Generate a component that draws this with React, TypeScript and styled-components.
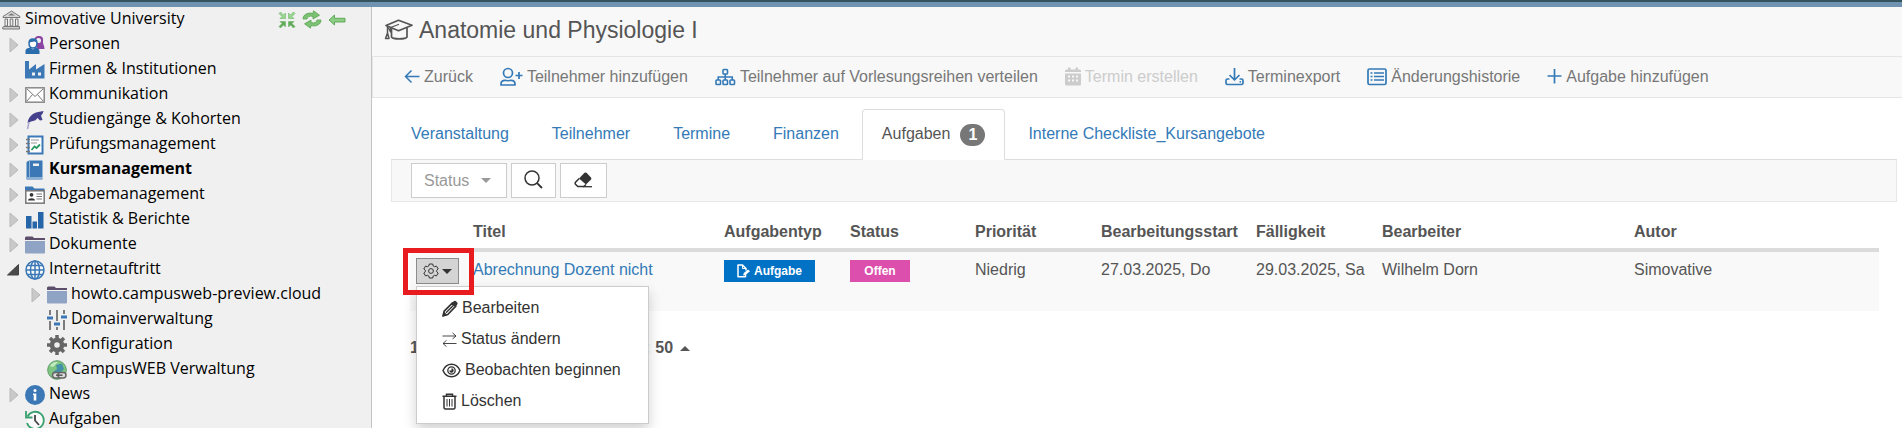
import React from 'react';
import styled, { createGlobalStyle, css } from 'styled-components';

const BLUE = '#337ab7';
const GREY = '#777777';
const DARK = '#333333';

const GlobalStyle = createGlobalStyle`
  *, *::before, *::after { box-sizing: border-box; }
  body {
    margin: 0;
    background: #ffffff;
    color: #555555;
    font-family: "Liberation Sans", Arial, sans-serif;
    font-size: 16px;
    line-height: 22px;
  }
  a { text-decoration: none; color: inherit; }
  button, select { font: inherit; color: inherit; margin: 0; }
  ul { list-style: none; margin: 0; padding: 0; }
  svg { display: block; flex: none; }
`;

/* ---------- page frame ---------- */

const Page = styled.div`
  display: flex;
  flex-direction: column;
  height: 100vh;
`;

const TopBar = styled.div`
  flex: none;
  height: 7px;
  background: #6f93b1;
  border-top: 2px solid #33535f;
`;

const Columns = styled.div`
  display: flex;
  flex: 1;
  min-height: 0;
`;

const Sidebar = styled.nav`
  flex: none;
  width: 372px;
  overflow: hidden;
  background: #f0f0f0;
  border-right: 1px solid #c4c4c4;
  color: #000000;
  font-family: "Open Sans", "Noto Sans", sans-serif;
`;

const Main = styled.main`
  flex: 1;
  min-width: 0;
`;

/* ---------- sidebar tree ---------- */

const TreeHead = styled.div`
  display: flex;
  align-items: center;
  height: 25px;
  padding: 0 25px 0 2px;
`;

const TreeTools = styled.div`
  display: flex;
  align-items: center;
  gap: 6px;
  margin-left: auto;
`;

const ToolButton = styled.button`
  padding: 0;
  border: 0;
  background: none;
`;

const TreeRow = styled.li<{ $level: number }>`
  display: flex;
  align-items: center;
  height: 25px;
  padding-left: ${p => 7 + p.$level * 22}px;
`;

const Twisty = styled.span`
  flex: none;
  width: 18px;
`;

const TreeLink = styled.a<{ $bold?: boolean }>`
  display: flex;
  align-items: center;
  gap: 4px;
  font-weight: ${p => (p.$bold ? 700 : 400)};
`;

const TreeLabel = styled.span`
  padding-bottom: 3px;
  line-height: 22px;
  white-space: nowrap;
`;

/* ---------- header and toolbar ---------- */

const TitleBar = styled.header`
  display: flex;
  align-items: center;
  gap: 6px;
  height: 49px;
  padding: 0 12px 4px;
  background: #f8f8f8;
`;

const Title = styled.h1`
  margin: 0;
  font-size: 23px;
  line-height: 26px;
  font-weight: 400;
`;

const Toolbar = styled.div`
  display: flex;
  align-items: center;
  gap: 27px;
  height: 42px;
  padding: 0 31px 1px;
  background: #f8f8f8;
  border: 1px solid #e5e5e5;
  border-right: 0;
`;

const Action = styled.button`
  display: flex;
  align-items: center;
  gap: 4px;
  padding: 0;
  border: 0;
  background: none;
  color: ${GREY};
  white-space: nowrap;
  svg { color: ${BLUE}; }
  &:disabled, &:disabled svg { color: #cccccc; }
`;

/* ---------- tabs and filters ---------- */

const Content = styled.div`
  padding: 11px 5px 0 19px;
`;

const Tabs = styled.div`
  display: flex;
  gap: 3px;
  border-bottom: 1px solid #dddddd;
`;

const Tab = styled.a<{ $active?: boolean }>`
  display: flex;
  align-items: center;
  gap: 10px;
  height: 51px;
  margin-bottom: -1px;
  padding: 0 19px 2px;
  border: 1px solid transparent;
  border-radius: 4px 4px 0 0;
  color: ${BLUE};
  white-space: nowrap;
  ${p => p.$active && css`
    color: #555555;
    background: #ffffff;
    border-color: #dddddd #dddddd transparent;
  `}
`;

const Count = styled.span`
  width: 25px;
  margin-top: 2px;
  border-radius: 11px;
  background: #777777;
  color: #ffffff;
  font-weight: 700;
  text-align: center;
`;

const FilterBar = styled.div`
  display: flex;
  gap: 4px;
  height: 42px;
  padding: 3px 19px;
  background: #f8f8f8;
  border: 1px solid #e7e7e7;
  border-top: 0;
`;

const SelectBox = styled.label`
  display: flex;
  align-items: center;
  width: 96px;
  height: 35px;
  padding-right: 15px;
  background: #ffffff;
  border: 1px solid #cccccc;
  color: #999999;
`;

const Select = styled.select`
  flex: 1;
  min-width: 0;
  padding: 0 0 0 12px;
  border: 0;
  background: none;
  appearance: none;
`;

const FilterButton = styled.button<{ $width: number }>`
  display: flex;
  align-items: center;
  justify-content: center;
  width: ${p => p.$width}px;
  height: 35px;
  padding: 0 0 2px;
  background: #ffffff;
  border: 1px solid #cccccc;
  color: ${DARK};
`;

/* ---------- table ---------- */

const TableArea = styled.div`
  padding: 8px 18px 0 19px;
`;

const Table = styled.table`
  width: 100%;
  table-layout: fixed;
  border-collapse: separate;
  border-spacing: 0;
`;

const HeadCell = styled.th`
  height: 42px;
  padding: 6px 5px 0;
  border-bottom: 4px solid #dbdbdb;
  font-weight: 700;
  text-align: left;
  white-space: nowrap;
`;

const Cell = styled.td`
  height: 59px;
  padding: 7px 5px 0;
  background: #f9f9f9;
  vertical-align: top;
  white-space: nowrap;
`;

const TaskLink = styled.a`
  color: ${BLUE};
`;

const Tag = styled.span<{ $color: string }>`
  display: inline-flex;
  align-items: center;
  justify-content: center;
  gap: 4px;
  min-width: 60px;
  height: 22px;
  margin-top: 1px;
  padding: 0 13px;
  background: ${p => p.$color};
  color: #ffffff;
  font-size: 12px;
  font-weight: 700;
  vertical-align: top;
`;

const MenuAnchor = styled.div`
  position: relative;
  width: 44px;
  margin: -1px 0 0 1px;
`;

const GearButton = styled.button`
  display: flex;
  align-items: center;
  gap: 3px;
  width: 43px;
  height: 26px;
  padding: 0 6px;
  background: #d4d4d4;
  border: 1px solid #8c8c8c;
  color: ${DARK};
`;

const Highlight = styled.div`
  position: absolute;
  z-index: 3;
  top: -10px;
  left: -13px;
  width: 71px;
  height: 47px;
  border: 5px solid #e81b1f;
  pointer-events: none;
`;

const Menu = styled.ul`
  position: absolute;
  z-index: 2;
  top: 28px;
  left: 0;
  width: 233px;
  padding: 6px 0;
  background: #ffffff;
  border: 1px solid #cccccc;
  box-shadow: 0 6px 12px rgba(0, 0, 0, 0.18);
`;

const MenuItem = styled.button`
  display: flex;
  align-items: center;
  gap: 4px;
  width: 100%;
  height: 31px;
  padding: 0 25px 1px;
  border: 0;
  background: none;
  color: ${DARK};
  white-space: nowrap;
`;

const Pager = styled.div`
  display: flex;
  align-items: center;
  padding-top: 26px;
  font-weight: 700;
`;

const PageNumber = styled.span`
  width: 235px;
`;

const PageSize = styled.button`
  display: flex;
  align-items: center;
  gap: 7px;
  padding: 0 0 0 5px;
  border: 0;
  background: none;
  font-weight: 700;
`;

/* ---------- icons ---------- */

type SvgProps = { w: number; h: number; children: React.ReactNode };
const Svg = ({ w, h, children }: SvgProps) => (
  <svg width={w} height={h} viewBox={`0 0 ${w} ${h}`} fill="none" aria-hidden="true">
    {children}
  </svg>
);

const CaretDown = () => (
  <Svg w={10} h={5}><path d="M0 0H10L5 5Z" fill="currentColor" /></Svg>
);
const CaretUp = () => (
  <Svg w={10} h={5}><path d="M0 5H10L5 0Z" fill="currentColor" /></Svg>
);

const Closed = () => (
  <Svg w={12} h={16}>
    <path d="M3 1L11 8L3 15Z" fill="#c9c9c9" stroke="#b9b9b9" />
  </Svg>
);
const Opened = () => (
  <Svg w={12} h={16}><path d="M11.500 2.500V13H0.500Z" fill="#4a4a4a" stroke="#444" /></Svg>
);

const BankIcon = () => (
  <Svg w={19} h={20}>
    <path d="M1 6.500L9.500 1L18 6.500V7.500H1Z" fill="#d9d9d9" stroke="#777" />
    <path d="M6 5.500L9.500 3.200L13 5.500Z" fill="#777" />
    <path d="M3 9H5.500V16H3ZM8.200 9H10.800V16H8.200ZM13.500 9H16V16H13.500Z" fill="#eee" stroke="#777" />
    <path d="M1.500 16.500H17.500V19H.8V17Z" fill="#ccc" stroke="#777" />
  </Svg>
);
const CollapseIcon = () => (
  <Svg w={18} h={18}>
    <g stroke="#6fb568" strokeWidth=".6">
      <path d="M1 2.500L2.500 1L5.500 4L7.500 2V7.500H2L4 5.500Z" fill="#9ad692" />
      <path d="M17 2.500L15.500 1L12.500 4L10.500 2V7.500H16L14 5.500Z" fill="#9ad692" />
      <path d="M1 15.500L2.500 17L5.500 14L7.500 16V10.500H2L4 12.500Z" fill="#5fab59" />
      <path d="M17 15.500L15.500 17L12.500 14L10.500 16V10.500H16L14 12.500Z" fill="#5fab59" />
    </g>
  </Svg>
);
const RefreshIcon = () => (
  <Svg w={20} h={19}>
    <g fill="#7cc274" stroke="#57a44f" strokeWidth=".8">
      <path d="M1 9C1 4.500 6 2 11 3.500L11.500 .8L17.500 5.200L11 9L11 6.500C7.500 5.500 5.500 6.500 5 9Z" />
      <path d="M19 10C19 14.500 14 17 9 15.500L8.500 18.200L2.500 13.800L9 10L9 12.500C12.500 13.500 14.500 12.500 15 10Z" />
    </g>
  </Svg>
);
const BackIcon = () => (
  <Svg w={18} h={12}>
    <path d="M1 6L6.500 1V4.300H17V8H6.500V11Z" fill="#8ccd85" stroke="#57a44f" strokeWidth=".9" />
  </Svg>
);
const PeopleIcon = () => (
  <Svg w={20} h={20}>
    <path d="M9.500 6C9 2.500 11 1 14 1C17.500 1 18.500 3 18 7C18 10 19.500 10 19.500 14H12Z" fill="#8a45a3" />
    <circle cx="13.500" cy="5.500" r="2.500" fill="#f0f0f0" />
    <path d="M4 8C4 5 5.500 4 8 4C10.500 4 12 5 12 8C12 12 10 13 8 13C6 13 4 12 4 8Z" fill="#fff" stroke="#2b6cad" strokeWidth="1.500" />
    <path d="M4 8C4 5 5.500 4 8 4C10.500 4 12 5 12 8L10 6.500L6 7Z" fill="#2b6cad" />
    <path d="M.5 19V16C.5 13.500 3 13 5 12.500L8 14.500L10.500 12.500C12.500 13 14.500 14 14.500 16V19Z" fill="#2b6cad" />
  </Svg>
);
const FactoryIcon = () => (
  <Svg w={20} h={19}>
    <path d="M0 18.500V1H4V9.500L11 4V9.500L19.500 4V18.500Z" fill="#3c78b5" />
    <path d="M7 12.500H10V15.500H7ZM13 12.500H16V15.500H13Z" fill="#f0f0f0" />
  </Svg>
);
const MailIcon = () => (
  <Svg w={20} h={16}>
    <rect x=".8" y=".8" width="18.400" height="14.400" fill="#fff" stroke="#888" strokeWidth="1.500" />
    <path d="M2 2L10 9.500L18 2M2 14L7.500 7.500M18 14L12.500 7.500" stroke="#777" />
  </Svg>
);
const QuillIcon = () => (
  <Svg w={20} h={20}>
    <path d="M2.500 13C3 9 5 6 8 4C11 1.800 15 2 18.500 1C18 3 17.500 4 16 5.500L17.500 10L15 10.500L12.500 8C10 11.500 8 10.500 5 12Z" fill="#45418c" />
    <path d="M4 12L2.500 19" stroke="#a9a5cf" strokeWidth="1.500" />
  </Svg>
);
const ReportIcon = () => (
  <Svg w={20} h={20}>
    <rect x="3.500" y="1.500" width="14" height="17" fill="#fff" stroke="#3c78b5" strokeWidth="2" />
    <path d="M6 5H14M6 8H12" stroke="#999" />
    <path d="M6.500 15L9.500 11.500L11.500 13L15 9.500" stroke="#2a9a62" strokeWidth="1.800" />
    <path d="M1 4.500H5M1 8.500H5M1 12.500H5M1 16.500H5" stroke="#777" strokeWidth="1.500" />
  </Svg>
);
const BookIcon = () => (
  <Svg w={20} h={20}>
    <path d="M1.500 2L4 .5H17.500V19.500H1.500Z" fill="#3c78b5" />
    <path d="M4.500 1V17" stroke="#8fb4d8" />
    <path d="M2 18H17.500" stroke="#dce8f3" />
    <path d="M8 3.500H14V6H8Z" fill="#f0f0f0" />
  </Svg>
);
const CardIcon = () => (
  <Svg w={20} h={18}>
    <path d="M0 5V.5H7.500L9.500 2.500H19.500V5Z" fill="#3c78b5" />
    <rect x=".8" y="4.800" width="18.400" height="12.400" fill="#fff" stroke="#777" strokeWidth="1.500" />
    <circle cx="6.500" cy="8.800" r="1.900" fill="#333" />
    <path d="M3 14.500C3 11.500 10 11.500 10 14.500Z" fill="#333" />
    <path d="M11.500 8H17M11.500 10.500H17M11.500 13H17" stroke="#777" />
  </Svg>
);
const BarsIcon = () => (
  <Svg w={20} h={20}>
    <path d="M1 6H6.500V18.500H1ZM7.500 11.500H12V18.500H7.500ZM13 2H18.500V18.500H13Z" fill="#2666a8" />
  </Svg>
);
const FolderIcon = () => (
  <Svg w={20} h={18}>
    <path d="M0 4V1.500L1 .5H7.500L9 2H20V4Z" fill="#5d4f6b" />
    <path d="M0 5H20V16.500Q20 17.500 19 17.500H1Q0 17.500 0 16.500Z" fill="#8fa3c4" />
  </Svg>
);
const GlobeIcon = () => (
  <Svg w={20} h={20}>
    <g stroke="#3c78b5" strokeWidth="1.500">
      <circle cx="10" cy="10" r="9" fill="#f7fafd" />
      <ellipse cx="10" cy="10" rx="4.500" ry="9" />
      <path d="M10 1V19M1 10H19M2.500 5.500H17.500M2.500 14.500H17.500" />
    </g>
  </Svg>
);
const SlidersIcon = () => (
  <Svg w={20} h={20}>
    <path d="M3 0V5M3 11V20M10 0V11M10 17V20M17 0V4M17 10V20" stroke="#555" strokeWidth="1.500" />
    <path d="M0 6.500H6V9.500H0ZM7 12.500H13V15.500H7ZM14 5.500H20V8.500H14Z" fill="#3c78b5" />
  </Svg>
);
const CogSolidIcon = () => (
  <Svg w={20} h={20}>
    <circle cx="10" cy="10" r="5" stroke="#666" strokeWidth="4.500" />
    <path d="M10 0V3.500M10 16.500V20M0 10H3.500M16.500 10H20M3 3L5.500 5.500M14.500 14.500L17 17M17 3L14.500 5.500M5.500 14.500L3 17" stroke="#666" strokeWidth="3.500" />
  </Svg>
);
const WebLinkIcon = () => (
  <Svg w={20} h={20}>
    <circle cx="10" cy="10" r="9.300" fill="#7fc683" stroke="#5f9d66" />
    <path d="M9 5L15 3.500L17 9L12 14L6 12L10 9Z" fill="#4592a8" />
    <path d="M3 6C5 2 9 2 11 2L6 7Z" fill="#c5ebc2" />
    <rect x="5.500" y="12.500" width="8" height="5.500" rx="2.700" fill="#ddd" stroke="#666" strokeWidth="1.500" />
    <rect x="11" y="12.500" width="8" height="5.500" rx="2.700" fill="#ddd" stroke="#666" strokeWidth="1.500" />
    <path d="M9 15.200H15.500" stroke="#555" strokeWidth="1.500" />
  </Svg>
);
const InfoIcon = () => (
  <Svg w={20} h={20}>
    <circle cx="10" cy="10" r="10" fill="#3c78b5" />
    <circle cx="10" cy="5.500" r="1.500" fill="#fff" />
    <path d="M8 8.500H11.300V15.500H8.700V10H8Z" fill="#fff" />
  </Svg>
);
const HistoryIcon = () => (
  <Svg w={20} h={20}>
    <path d="M2.500 6.500A8.600 8.600 0 1 1 2 13" fill="#fafafa" stroke="#3aa06e" strokeWidth="1.800" />
    <path d="M1 1V7.500H7.500" stroke="#3aa06e" strokeWidth="1.800" />
    <path d="M10 5V10.500L14 15" stroke="#444" strokeWidth="1.800" />
  </Svg>
);

const GraduationIcon = () => (
  <Svg w={29} h={21}>
    <g stroke="#555" strokeWidth="1.700" strokeLinejoin="round" strokeLinecap="round">
      <path d="M14.500 1.200L28 6.200L14.500 11.700L2 6.500Z" />
      <path d="M14.500 5.500L6.500 8.500V13L4.500 9" strokeWidth="1.300" />
      <path d="M7.500 10V18C9 20.500 21.500 20.500 23 18V9" />
      <path d="M3.500 7.500V14L1.500 19.500H5L3.500 14" strokeWidth="1.500" />
    </g>
  </Svg>
);
const ArrowLeftIcon = () => (
  <Svg w={16} h={16}>
    <path d="M15.500 7.500H1.500M7.500 1.500L1.500 7.500L7.500 13.500" stroke="currentColor" strokeWidth="1.500" />
  </Svg>
);
const PersonPlusIcon = () => (
  <Svg w={23} h={20}>
    <circle cx="8" cy="6" r="4.500" stroke="currentColor" strokeWidth="1.700" />
    <path d="M1 18V17C1 14.500 3 13.300 5 13.300C7 13.900 9 13.900 11 13.300C13 13.300 15 14.500 15 17V18Z" stroke="currentColor" strokeWidth="1.700" strokeLinejoin="round" />
    <path d="M19 5V12M15.500 8.500H22.500" stroke="currentColor" strokeWidth="1.700" />
  </Svg>
);
const SitemapIcon = () => (
  <Svg w={21} h={18}>
    <g stroke="currentColor" strokeWidth="1.600">
      <rect x="8" y="1.500" width="4.500" height="4.500" rx=".8" />
      <rect x="1" y="12" width="4.500" height="4.500" rx=".8" />
      <rect x="8" y="12" width="4.500" height="4.500" rx=".8" />
      <rect x="15" y="12" width="4.500" height="4.500" rx=".8" />
      <path d="M10.250 6V12M3.250 12V9H17.250V12" />
    </g>
  </Svg>
);
const CalendarIcon = () => (
  <Svg w={16} h={19}>
    <path d="M0 5V4Q0 2.500 1.500 2.500H3V.5H5.500V2.500H10.500V.5H13V2.500H14.500Q16 2.500 16 4V5ZM0 6.500H16V17Q16 18.500 14.500 18.500H1.500Q0 18.500 0 17Z" fill="currentColor" />
    <path d="M3 8.500H5V10.500H3ZM7 8.500H9V10.500H7ZM11 8.500H13V10.500H11ZM3 12.500H5V14.500H3ZM7 12.500H9V14.500H7ZM11 12.500H13V14.500H11Z" fill="#f8f8f8" />
  </Svg>
);
const DownloadIcon = () => (
  <Svg w={19} h={19}>
    <g stroke="currentColor" strokeWidth="1.700" strokeLinejoin="round">
      <path d="M9.500 1V13M4.500 8L9.500 13L14.500 8" />
      <path d="M4.500 12H2.500Q1 12 1 13.500V16Q1 17.500 2.500 17.500H16.500Q18 17.500 18 16V13.500Q18 12 16.500 12H14.500" />
    </g>
    <circle cx="15.300" cy="14.800" r=".9" fill="currentColor" />
  </Svg>
);
const ListIcon = () => (
  <Svg w={20} h={18}>
    <rect x="1" y="1" width="18" height="15.500" rx="1.500" stroke="currentColor" strokeWidth="1.700" />
    <path d="M3.500 5H5.500M3.500 8.500H5.500M3.500 12H5.500M7 5H17M7 8.500H17M7 12H17" stroke="currentColor" strokeWidth="1.600" />
  </Svg>
);
const PlusIcon = () => (
  <Svg w={15} h={17}>
    <path d="M7.500 1V15.500M.5 8H14.500" stroke="currentColor" strokeWidth="1.700" />
  </Svg>
);
const SearchIcon = () => (
  <Svg w={19} h={19}>
    <circle cx="8" cy="8" r="7" stroke="currentColor" strokeWidth="1.500" />
    <path d="M12.800 12.800L18 18" stroke="currentColor" strokeWidth="1.900" />
  </Svg>
);
const EraserIcon = () => (
  <Svg w={19} h={16}>
    <path d="M5 6.500L10.500 .8Q11.500 0 12.500 .8L17 5.500Q17.800 6.500 17 7.500L12 12.500Z" fill="currentColor" />
    <path d="M5.200 6.500L1.500 10.200Q.8 11.200 1.500 12.200L3.800 14.500H9.800L12 12.500" stroke="currentColor" strokeWidth="1.500" />
    <path d="M9 14.700H18" stroke="currentColor" strokeWidth="1.300" />
  </Svg>
);
const GearIcon = () => (
  <Svg w={16} h={16}>
    <g stroke="currentColor" strokeWidth="1" strokeLinejoin="round">
      <path d="M6.300 1H9.700L10.200 3L11.500 3.700L13.500 3.100L15.200 6L13.700 7.300V8.700L15.200 10L13.500 12.900L11.500 12.300L10.200 13L9.700 15H6.300L5.800 13L4.500 12.300L2.500 12.900L.8 10L2.300 8.700V7.300L.8 6L2.500 3.100L4.500 3.700L5.800 3Z" />
      <circle cx="8" cy="8" r="2.400" />
    </g>
  </Svg>
);
const FileEditIcon = () => (
  <Svg w={13} h={14}>
    <path d="M8.500 10V12.800H1V1H5.500L9 4.500V6.500" stroke="#fff" strokeWidth="1.500" strokeLinejoin="round" />
    <path d="M5.500 1V4.500H9" stroke="#fff" />
    <path d="M6 11.500L6.800 9L11 5.500L13 7.200L8.500 11Z" fill="#fff" />
  </Svg>
);
const PencilIcon = () => (
  <Svg w={16} h={17}>
    <path d="M1 16L2.200 11.200L10.500 2.900L13.800 6.200L5.800 14.500Z" stroke="currentColor" strokeWidth="1.700" strokeLinejoin="round" />
    <path d="M9.800 3.200L12 1Q13 .2 14 1.200L15.200 2.500Q16 3.500 15.300 4.500L13.300 6.700ZM.5 16.500L1.800 11.500L5.300 15Z" fill="currentColor" />
    <path d="M4 12.800L11.800 5" stroke="currentColor" strokeWidth="1.300" />
  </Svg>
);
const SwapIcon = () => (
  <Svg w={15} h={15}>
    <path d="M.5 4H14M10.500 .8L14 4L10.500 7M14.500 11.500H1M4.500 8.300L1 11.500L4.500 14.700" stroke="currentColor" strokeWidth=".9" />
  </Svg>
);
const EyeIcon = () => (
  <Svg w={19} h={15}>
    <path d="M1 7.500C4.500 -.8 14.500 -.8 18 7.500C14.500 15.800 4.500 15.800 1 7.500Z" stroke="currentColor" strokeWidth="1.500" />
    <circle cx="9.500" cy="7.500" r="3.700" stroke="currentColor" strokeWidth="1.300" />
    <path d="M9.500 5.300A2.200 2.200 0 1 1 7.300 7.500H9.500Z" fill="currentColor" />
  </Svg>
);
const TrashIcon = () => (
  <Svg w={15} h={17}>
    <path d="M.5 3.300H14.500M4.500 3V1.200H10.500V3" stroke="currentColor" strokeWidth="1.500" />
    <path d="M2 3.500V14.500Q2 16 3.500 16H11.500Q13 16 13 14.500V3.500" stroke="currentColor" strokeWidth="1.500" />
    <path d="M5 6V13.500M7.500 6V13.500M10 6V13.500" stroke="currentColor" />
  </Svg>
);

/* ---------- data ---------- */

type TreeNode = {
  label: string;
  Icon: () => React.ReactElement;
  level?: number;
  state?: 'closed' | 'open';
  bold?: boolean;
};

const tree: TreeNode[] = [
  { label: 'Personen', Icon: PeopleIcon, state: 'closed' },
  { label: 'Firmen & Institutionen', Icon: FactoryIcon },
  { label: 'Kommunikation', Icon: MailIcon, state: 'closed' },
  { label: 'Studiengänge & Kohorten', Icon: QuillIcon, state: 'closed' },
  { label: 'Prüfungsmanagement', Icon: ReportIcon, state: 'closed' },
  { label: 'Kursmanagement', Icon: BookIcon, state: 'closed', bold: true },
  { label: 'Abgabemanagement', Icon: CardIcon, state: 'closed' },
  { label: 'Statistik & Berichte', Icon: BarsIcon, state: 'closed' },
  { label: 'Dokumente', Icon: FolderIcon, state: 'closed' },
  { label: 'Internetauftritt', Icon: GlobeIcon, state: 'open' },
  { label: 'howto.campusweb-preview.cloud', Icon: FolderIcon, level: 1, state: 'closed' },
  { label: 'Domainverwaltung', Icon: SlidersIcon, level: 1 },
  { label: 'Konfiguration', Icon: CogSolidIcon, level: 1 },
  { label: 'CampusWEB Verwaltung', Icon: WebLinkIcon, level: 1 },
  { label: 'News', Icon: InfoIcon, state: 'closed' },
  { label: 'Aufgaben', Icon: HistoryIcon },
];

const actions = [
  { label: 'Zurück', Icon: ArrowLeftIcon },
  { label: 'Teilnehmer hinzufügen', Icon: PersonPlusIcon },
  { label: 'Teilnehmer auf Vorlesungsreihen verteilen', Icon: SitemapIcon },
  { label: 'Termin erstellen', Icon: CalendarIcon, disabled: true },
  { label: 'Terminexport', Icon: DownloadIcon },
  { label: 'Änderungshistorie', Icon: ListIcon },
  { label: 'Aufgabe hinzufügen', Icon: PlusIcon },
];

const tabs: { label: string; count?: number }[] = [
  { label: 'Veranstaltung' },
  { label: 'Teilnehmer' },
  { label: 'Termine' },
  { label: 'Finanzen' },
  { label: 'Aufgaben', count: 1 },
  { label: 'Interne Checkliste_Kursangebote' },
];

const columns = [
  { label: '', width: 58 },
  { label: 'Titel', width: 251 },
  { label: 'Aufgabentyp', width: 126 },
  { label: 'Status', width: 125 },
  { label: 'Priorität', width: 126 },
  { label: 'Bearbeitungsstart', width: 155 },
  { label: 'Fälligkeit', width: 126 },
  { label: 'Bearbeiter', width: 252 },
  { label: 'Autor', width: 250 },
];

const Col = styled.col<{ $width: number }>`
  width: ${p => p.$width}px;
`;

const menu = [
  { label: 'Bearbeiten', Icon: PencilIcon },
  { label: 'Status ändern', Icon: SwapIcon },
  { label: 'Beobachten beginnen', Icon: EyeIcon },
  { label: 'Löschen', Icon: TrashIcon },
];

export default function App() {
  return (
    <Page>
      <GlobalStyle />
      <TopBar />
      <Columns>
        <Sidebar>
          <TreeHead>
            <TreeLink href="#"><BankIcon /><TreeLabel>Simovative University</TreeLabel></TreeLink>
            <TreeTools>
              <ToolButton aria-label="Alle einklappen"><CollapseIcon /></ToolButton>
              <ToolButton aria-label="Aktualisieren"><RefreshIcon /></ToolButton>
              <ToolButton aria-label="Ausblenden"><BackIcon /></ToolButton>
            </TreeTools>
          </TreeHead>
          <ul>
            {tree.map(({ label, Icon, level = 0, state, bold }) => (
              <TreeRow key={label} $level={level}>
                <Twisty>
                  {state === 'closed' && <Closed />}
                  {state === 'open' && <Opened />}
                </Twisty>
                <TreeLink href="#" $bold={bold}>
                  <Icon />
                  <TreeLabel>{label}</TreeLabel>
                </TreeLink>
              </TreeRow>
            ))}
          </ul>
        </Sidebar>

        <Main>
          <TitleBar>
            <GraduationIcon />
            <Title>Anatomie und Physiologie I</Title>
          </TitleBar>
          <Toolbar>
            {actions.map(({ label, Icon, disabled }) => (
              <Action key={label} disabled={disabled}><Icon />{label}</Action>
            ))}
          </Toolbar>

          <Content>
            <Tabs>
              {tabs.map(({ label, count }) => (
                <Tab key={label} href="#" $active={count !== undefined}>
                  {label}
                  {count !== undefined && <Count>{count}</Count>}
                </Tab>
              ))}
            </Tabs>
            <FilterBar>
              <SelectBox>
                <Select aria-label="Status"><option>Status</option></Select>
                <CaretDown />
              </SelectBox>
              <FilterButton $width={45} aria-label="Suchen"><SearchIcon /></FilterButton>
              <FilterButton $width={47} aria-label="Zurücksetzen"><EraserIcon /></FilterButton>
            </FilterBar>

            <TableArea>
              <Table>
                <colgroup>
                  {columns.map(c => <Col key={c.label} $width={c.width} />)}
                </colgroup>
                <thead>
                  <tr>{columns.map(c => <HeadCell key={c.label}>{c.label}</HeadCell>)}</tr>
                </thead>
                <tbody>
                  <tr>
                    <Cell>
                      <MenuAnchor>
                        <GearButton aria-label="Aktionen"><GearIcon /><CaretDown /></GearButton>
                        <Menu>
                          {menu.map(({ label, Icon }) => (
                            <li key={label}><MenuItem><Icon />{label}</MenuItem></li>
                          ))}
                        </Menu>
                        <Highlight />
                      </MenuAnchor>
                    </Cell>
                    <Cell><TaskLink href="#">Abrechnung Dozent nicht</TaskLink></Cell>
                    <Cell><Tag $color="#0072c6"><FileEditIcon />Aufgabe</Tag></Cell>
                    <Cell><Tag $color="#dd4fad">Offen</Tag></Cell>
                    <Cell>Niedrig</Cell>
                    <Cell>27.03.2025, Do</Cell>
                    <Cell>29.03.2025, Sa</Cell>
                    <Cell>Wilhelm Dorn</Cell>
                    <Cell>Simovative</Cell>
                  </tr>
                </tbody>
              </Table>
              <Pager>
                <PageNumber>1</PageNumber>
                <span>:</span>
                <PageSize>50 <CaretUp /></PageSize>
              </Pager>
            </TableArea>
          </Content>
        </Main>
      </Columns>
    </Page>
  );
}
